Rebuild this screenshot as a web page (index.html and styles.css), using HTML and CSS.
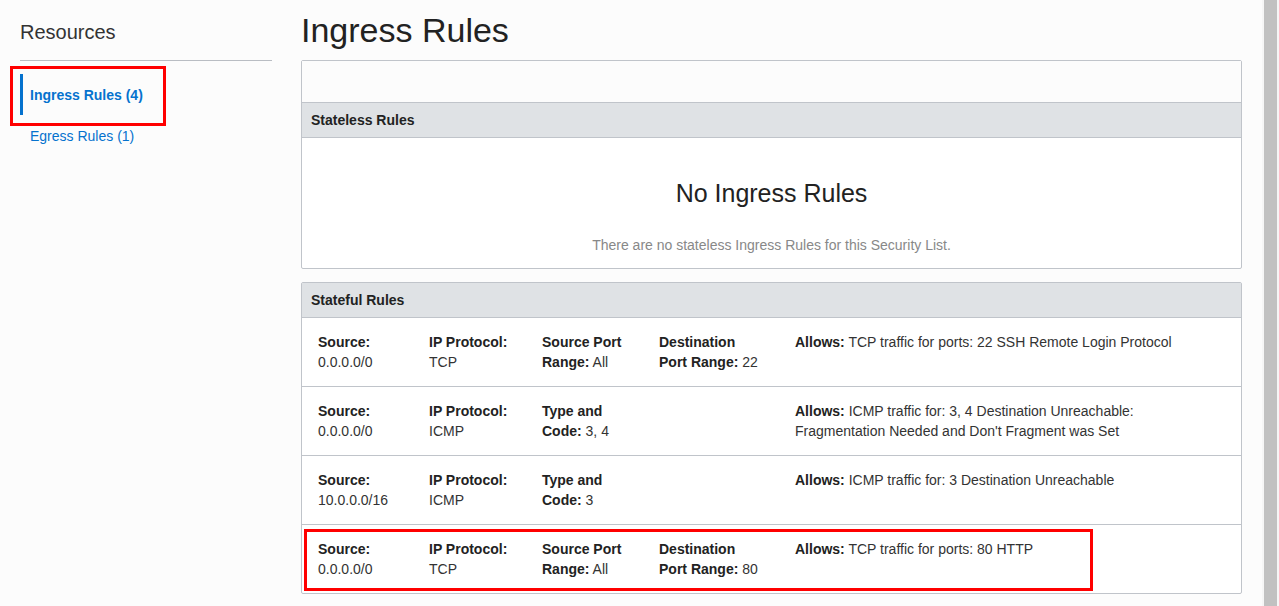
FILE: index.html
```html
<!DOCTYPE html>
<html>
<head>
<meta charset="utf-8">
<title>Ingress Rules</title>
<link rel="stylesheet" href="styles.css">
</head>
<body>
<div class="page">
  <aside class="sidebar">
    <h2 class="side-title">Resources</h2>
    <nav class="side-nav">
      <a class="nav-item active">Ingress Rules (4)</a>
      <a class="nav-item">Egress Rules (1)</a>
    </nav>
  </aside>
  <main class="main">
    <h1 class="page-title">Ingress Rules</h1>
    <section class="panel">
      <div class="toolbar"></div>
      <div class="panel-head">Stateless Rules</div>
      <div class="empty">
        <div class="empty-title">No Ingress Rules</div>
        <div class="empty-text">There are no stateless Ingress Rules for this Security List.</div>
      </div>
    </section>
    <section class="panel panel-second">
      <div class="panel-head">Stateful Rules</div>
      <div class="rule">
        <div class="cell c1"><b>Source:</b><br>0.0.0.0/0</div>
        <div class="cell c2"><b>IP Protocol:</b><br>TCP</div>
        <div class="cell c3"><b>Source Port Range:</b> All</div>
        <div class="cell c4"><b>Destination Port Range:</b> 22</div>
        <div class="cell c5"><b>Allows:</b> TCP traffic for ports: 22 SSH Remote Login Protocol</div>
      </div>
      <div class="rule">
        <div class="cell c1"><b>Source:</b><br>0.0.0.0/0</div>
        <div class="cell c2"><b>IP Protocol:</b><br>ICMP</div>
        <div class="cell c3"><b>Type and Code:</b> 3, 4</div>
        <div class="cell c4"></div>
        <div class="cell c5"><b>Allows:</b> ICMP traffic for: 3, 4 Destination Unreachable: Fragmentation Needed and Don't Fragment was Set</div>
      </div>
      <div class="rule">
        <div class="cell c1"><b>Source:</b><br>10.0.0.0/16</div>
        <div class="cell c2"><b>IP Protocol:</b><br>ICMP</div>
        <div class="cell c3"><b>Type and Code:</b> 3</div>
        <div class="cell c4"></div>
        <div class="cell c5"><b>Allows:</b> ICMP traffic for: 3 Destination Unreachable</div>
      </div>
      <div class="rule rule-marked">
        <div class="cell c1"><b>Source:</b><br>0.0.0.0/0</div>
        <div class="cell c2"><b>IP Protocol:</b><br>TCP</div>
        <div class="cell c3"><b>Source Port Range:</b> All</div>
        <div class="cell c4"><b>Destination Port Range:</b> 80</div>
        <div class="cell c5"><b>Allows:</b> TCP traffic for ports: 80 HTTP</div>
        <div class="mark mark-row"></div>
      </div>
    </section>
  </main>
  <div class="spacer"></div>
  <div class="scrollbar"><div class="thumb"></div></div>
  <div class="mark mark-nav"></div>
</div>
</body>
</html>
```

FILE: styles.css
```css
* { box-sizing: border-box; }
html, body {
  margin: 0;
  padding: 0;
  height: 100%;
  overflow: hidden;
}
body {
  font-family: "Liberation Sans", Arial, sans-serif;
  font-size: 14px;
  color: #333;
  background: #fcfcfc;
}
.page {
  position: relative;
  display: flex;
  height: 606px;
}
.sidebar {
  flex: none;
  width: 272px;
  padding-left: 20px;
}
.side-title {
  margin: 0;
  padding: 20px 0 16px;
  font-size: 20px;
  line-height: 24px;
  font-weight: normal;
  color: #333;
  border-bottom: 1px solid #b9bdc3;
}
.side-nav {
  display: flex;
  flex-direction: column;
  padding-top: 13px;
}
.nav-item {
  display: flex;
  align-items: center;
  height: 41px;
  padding-left: 10px;
  color: #0572ce;
  font-size: 14px;
  text-decoration: none;
}
.nav-item.active {
  font-weight: bold;
  border-left: 3px solid #0572ce;
  padding-left: 7px;
}
.main {
  flex: none;
  width: 941px;
  margin-left: 29px;
}
.page-title {
  margin: 10px 0 10px;
  font-size: 34px;
  line-height: 40px;
  font-weight: normal;
  color: #222;
}
.panel {
  border: 1px solid #c0c4ca;
  border-radius: 2px;
  background: #fff;
}
.panel-second {
  margin-top: 13px;
}
.toolbar {
  height: 42px;
  background: #fcfcfc;
  border-bottom: 1px solid #c0c4ca;
}
.panel-head {
  height: 35px;
  padding-left: 9px;
  display: flex;
  align-items: center;
  background: #dfe2e5;
  border-bottom: 1px solid #c0c4ca;
  font-weight: bold;
  font-size: 14px;
  color: #222;
}
.empty {
  height: 130px;
  text-align: center;
  padding-top: 40px;
}
.empty-title {
  font-size: 25px;
  line-height: 30px;
  color: #222;
}
.empty-text {
  margin-top: 28px;
  font-size: 14px;
  line-height: 18px;
  color: #888;
}
.rule {
  position: relative;
  display: grid;
  grid-template-columns: 81px 83px 87px 106px 400px;
  column-gap: 30px;
  padding: 14px 16px 14px;
  line-height: 20px;
  border-top: 1px solid #c0c4ca;
  color: #333;
}
.panel-head + .rule { border-top: none; padding-top: 14px; }
.rule b { color: #222; }
.scrollbar {
  flex: none;
  width: 17px;
  height: 606px;
  background: #f6f6f6;
  padding-left: 2px;
}
.thumb {
  width: 13px;
  height: 606px;
  background: #c1c1c1;
}
.spacer { flex: 1; }
.mark {
  position: absolute;
  border: 3px solid #ff0000;
  pointer-events: none;
}
.mark-nav {
  left: 10px;
  top: 66px;
  width: 156px;
  height: 60px;
}
.mark-row {
  left: 2px;
  top: 4px;
  width: 789px;
  height: 62px;
}
```
